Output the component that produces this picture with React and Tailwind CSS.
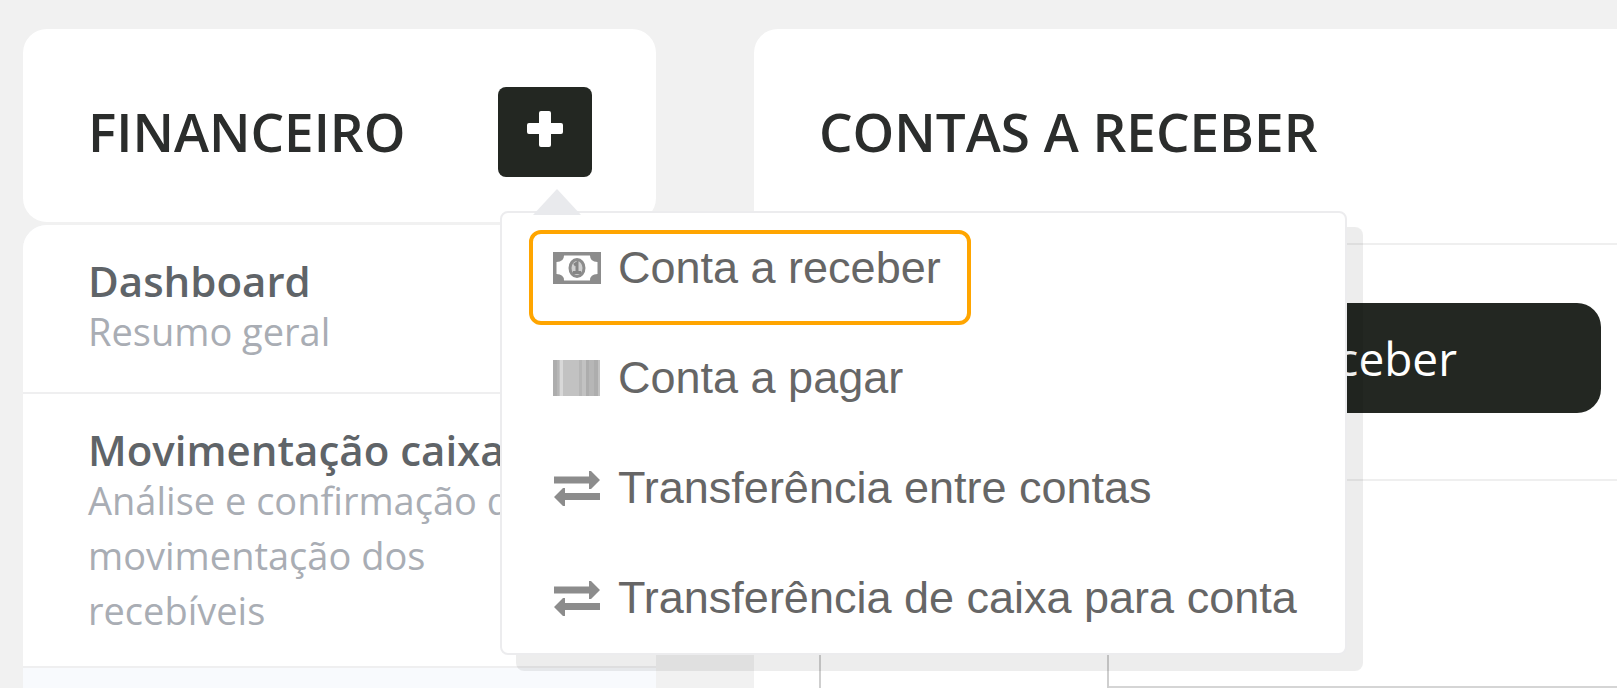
import React from "react";

function PlusIcon() {
  return (
    <svg viewBox="0 0 36 36" className="h-9 w-9" aria-hidden="true">
      <path
        fill="#fff"
        d="M14 0h8q2 0 2 2v10h10q2 0 2 2v7q0 2-2 2H24v11q0 2-2 2h-8q-2 0-2-2V23H2q-2 0-2-2v-7q0-2 2-2h10V2q0-2 2-2z"
      />
    </svg>
  );
}

function MoneyIcon() {
  return (
    <svg viewBox="0 0 50 36" className="h-9 w-[50px]" aria-hidden="true">
      <path
        fill="#8c8c8c"
        fillRule="evenodd"
        d="M1 2h48v32H1zM12 5.500q0 6.500-7.500 6.500v12q7.500 0 7.500 6.500h26q0-6.500 7.500-6.500V12q-7.500 0-7.500-6.500z"
      />
      <ellipse cx="25" cy="18" rx="7" ry="8.500" fill="#d0d0d0" stroke="#8c8c8c" strokeWidth="3" />
      <path fill="none" stroke="#858585" strokeWidth="3" d="M22 15l3-2v9M21 22.500h8" />
    </svg>
  );
}

function BarcodeIcon() {
  return (
    <svg viewBox="0 0 50 36" className="h-9 w-[50px]" aria-hidden="true">
      <path fill="#c2c2c2" d="M1 0h47v36H1z" />
      <path fill="#adadad" d="M1 0h4v36H1zM34 0h3v36h-3zM42 0h4v36h-4z" />
      <path fill="#b6b6b6" d="M5 0h2v36H5zM27 0h3v36h-3zM37 0h5v36h-5z" />
      <path fill="#d8d8d8" d="M8 0h3v36H8z" />
    </svg>
  );
}

function ExchangeIcon() {
  return (
    <svg viewBox="0 0 50 36" className="h-9 w-[50px]" aria-hidden="true">
      <path fill="#8c8c8c" d="M2 6.500h35V1h2l9 9-9 9h-2v-5.500H2z" />
      <path fill="#8c8c8c" d="M48 23H13v-5h-2l-9 9 9 9h2v-6h35z" />
    </svg>
  );
}

const actions = [
  { label: "Conta a receber", Icon: MoneyIcon, active: true },
  { label: "Conta a pagar", Icon: BarcodeIcon },
  { label: "Transferência entre contas", Icon: ExchangeIcon },
  { label: "Transferência de caixa para conta", Icon: ExchangeIcon },
];

function ActionMenu() {
  return (
    <div className="absolute top-[124px] left-0.5 z-20 w-max rounded-lg border-2 border-[#ececee] bg-white shadow-[16px_16px_0_rgba(0,0,0,0.07)]">
      <svg
        viewBox="0 0 48 26"
        className="absolute -top-6 left-[31px] h-[26px] w-12"
        aria-hidden="true"
      >
        <path fill="#e9eaed" d="M24 0l24 26H0z" />
      </svg>
      <ul className="pr-12 pl-[50px]">
        {actions.map(({ label, Icon, active }) => (
          <li key={label} className="relative">
            {active && (
              <span className="pointer-events-none absolute top-[17px] -left-[23px] h-[95px] w-[442px] rounded-xl border-4 border-[#ffa500]" />
            )}
            <a
              href="#"
              className="flex h-[110px] items-center gap-4 font-['Liberation_Sans',Arial,sans-serif] text-[45px] leading-[50px] text-[#666]"
            >
              <Icon />
              {label}
            </a>
          </li>
        ))}
      </ul>
    </div>
  );
}

function NavItem({ title, text }) {
  return (
    <li className="min-h-[169px] border-b-2 border-[#efeff0]">
      <a href="#" className="block px-[65px] pt-[33px] pb-7">
        <span className="block text-[42px] leading-[46px] font-semibold text-[#5f6468]">{title}</span>
        <span className="block text-[38px] leading-[55px] text-[#a9adb4]">{text}</span>
      </a>
    </li>
  );
}

export default function App() {
  return (
    <div className="flex min-h-screen gap-[98px] overflow-hidden bg-[#f1f1f1] pt-[29px] pl-[23px] font-['Open_Sans',sans-serif]">
      <aside className="flex w-[633px] shrink-0 flex-col gap-[3px]">
        <header className="flex h-[193px] items-center justify-between rounded-3xl bg-white pt-3 pr-16 pl-[65px]">
          <h2 className="text-[53px] leading-[72px] font-semibold text-[#2b2d2c]">FINANCEIRO</h2>
          <div className="relative">
            <button
              type="button"
              aria-label="Adicionar"
              className="flex h-[90px] w-[94px] items-center justify-center rounded-lg bg-[#232722] pb-1.5"
            >
              <PlusIcon />
            </button>
            <ActionMenu />
          </div>
        </header>
        <nav className="flex-1 rounded-t-3xl bg-[#f8fafd]">
          <ul className="overflow-hidden rounded-t-3xl bg-white">
            <NavItem title="Dashboard" text="Resumo geral" />
            <NavItem
              title="Movimentação caixa"
              text="Análise e confirmação da movimentação dos recebíveis"
            />
          </ul>
        </nav>
      </aside>

      <main className="flex min-w-0 flex-1 flex-col rounded-tl-3xl bg-white">
        <header className="flex h-[216px] items-center border-b-2 border-[#efefef] px-[65px] pb-2">
          <h1 className="text-[53px] leading-[72px] font-semibold text-[#2b2d2c]">
            CONTAS A RECEBER
          </h1>
        </header>
        <div className="flex justify-end border-b-2 border-[#efefef] pt-[58px] pr-4 pb-[66px]">
          <button
            type="button"
            className="h-[110px] rounded-3xl bg-[#232722] px-36 text-[46px] leading-[60px] text-white"
          >
            Conta a receber
          </button>
        </div>
        <div className="flex flex-1 pt-10 pl-[65px]">
          <div className="w-[290px] border-x-2 border-[#cfcfcf]" />
          <div className="flex-1 border-b-2 border-[#d5d5d5]" />
        </div>
      </main>
    </div>
  );
}
